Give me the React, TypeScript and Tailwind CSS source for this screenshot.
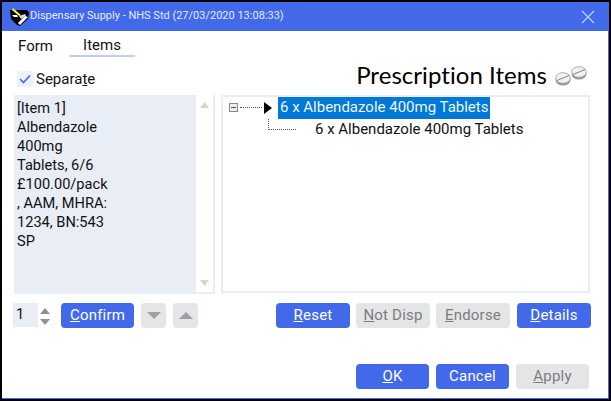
import React from "react";

function Btn({ children, disabled, w = "w-[74px]" }: { children: React.ReactNode; disabled?: boolean; w?: string }) {
  return (
    <div
      className={`${w} h-[25px] rounded-[4px] flex items-center justify-center text-[15px] tracking-[0.2px] ${
        disabled ? "bg-[#e4e5e7] text-[#7d7d7d]" : "bg-[#4169e9] text-white"
      }`}
    >
      {children}
    </div>
  );
}

function Tri({ up, className }: { up?: boolean; className: string }) {
  return (
    <svg width="16" height="8" viewBox="0 0 16 8" className={className}>
      <path d={up ? "M0 8 L8 0 L16 8 Z" : "M0 0 L8 8 L16 0 Z"} fill="currentColor" />
    </svg>
  );
}

function Logo() {
  return (
    <svg width="19" height="18" viewBox="0 0 19 18" className="shrink-0">
      <path d="M0 2 L17 2 L19 5 L18 11 L10 18 L7 17 L1 11 Z" fill="#000" />
      <path d="M3 0 L11 7 L9 8 L2 2 Z" fill="#f4ee3c" />
      <path d="M8 15 L15 8 L18 9 L10 17 Z" fill="#fff" />
      <path d="M9 8 L15 6 L16 8 L11 11 Z" fill="#ddd" />
      <path d="M2 7 L7 7 L8 9 L4 9 Z" fill="#fff" />
    </svg>
  );
}

function Pill({ className }: { className: string }) {
  return (
    <svg width="16" height="14" viewBox="0 0 16 14" className={className}>
      <ellipse cx="8" cy="8" rx="7.5" ry="5.5" fill="#9a9a9a" />
      <ellipse cx="8" cy="6" rx="7.3" ry="5.3" fill="#f2f2f2" stroke="#9c9c9c" strokeWidth="0.8" />
      <path d="M2 8.5 L14 3.5" stroke="#777" strokeWidth="0.9" />
    </svg>
  );
}

export default function App() {
  return (
    <div
      className="w-[611px] h-[401px] bg-black pl-[2px] pt-[2px] pr-[2px] pb-[2px] overflow-hidden text-[#111]"
      style={{ fontFamily: "Roboto, sans-serif" }}
    >
      <div className="w-[607px] h-[397px] bg-white border-r border-b border-[#4169e9] flex flex-col">
        <div className="h-[29px] bg-[#4169e9] flex items-center pl-[8px] pr-[13px] shrink-0">
          <Logo />
          <span className="ml-px text-[11px] text-[#e6ebff]">Dispensary Supply - NHS Std (27/03/2020 13:08:33)</span>
          <svg width="14" height="14" viewBox="0 0 14 14" className="ml-auto">
            <path d="M1 1 L13 13 M13 1 L1 13" stroke="#c5d2fb" strokeWidth="1.1" />
          </svg>
        </div>

        <div className="h-[27px] flex shrink-0 text-[15px]">
          <div className="ml-[16px] w-[51px] pt-[4px]">Form</div>
          <div className="w-[66px] h-[26px] border-b-2 border-[#c3cdec] text-center pt-[3px]">Items</div>
        </div>

        <div className="h-[37px] flex items-center justify-between shrink-0">
          <div className="flex items-center ml-[15px] mt-[5px]">
            <div className="w-[16px] h-[16px] bg-[#eef1f9] flex items-center justify-center">
              <svg width="12" height="10" viewBox="0 0 12 10">
                <path d="M1 5 L4.5 8.5 L11 1.5" fill="none" stroke="#4169e9" strokeWidth="1.6" />
              </svg>
            </div>
            <span className="ml-[3px] text-[15px]">
              Separa<u>t</u>e
            </span>
          </div>
          <div className="flex items-center mr-[21px] mt-[-3px]">
            <span className="text-[24px] text-black tracking-[0.05px]" style={{ fontFamily: "Lato, sans-serif" }}>
              Prescription Items
            </span>
            <div className="flex items-start ml-[8px] h-[24px]">
              <Pill className="mt-[9px]" />
              <Pill className="mt-[3px]" />
            </div>
          </div>
        </div>

        <div className="flex h-[199px] shrink-0">
          <div className="ml-[12px] w-[201px] bg-[#e9edf6] border-r-2 border-b-2 border-[#e9edf6] flex">
            <div className="w-[182px] pl-[3px] pt-[4px] text-[14.6px] leading-[19px]">
              [Item 1]<br />Albendazole<br />400mg<br />Tablets, 6/6<br />£100.00/pack<br />, AAM, MHRA:<br />1234, BN:543<br />SP
            </div>
            <div className="w-[17px] bg-white flex flex-col items-center justify-between pt-[7px] pb-[6px] text-[#d4d4d4]">
              <svg width="9" height="6" viewBox="0 0 9 6"><path d="M0 6 L4.5 0 L9 6 Z" fill="currentColor" /></svg>
              <svg width="9" height="6" viewBox="0 0 9 6"><path d="M0 0 L4.5 6 L9 0 Z" fill="currentColor" /></svg>
            </div>
          </div>
          <div className="ml-[6px] w-[369px] h-[198px] border-2 border-[#e9edf6] text-[15px] pl-[6px]">
            <div className="h-[21px] flex items-center">
              <div className="w-[9px] h-[9px] border border-[#8a8a8a] bg-[#ececec] flex items-center justify-center">
                <div className="w-[5px] h-px bg-[#2f57c8]" />
              </div>
              <div className="w-[22px] ml-[2px] border-t border-dotted border-[#555]" />
              <svg width="8" height="12" viewBox="0 0 8 12" className="ml-[2px]"><path d="M0 0 L8 6 L0 12 Z" fill="#000" /></svg>
              <div className="ml-[6px] h-[22px] w-[212px] bg-[#0078d7] text-[#eef6ff] pl-[2px] flex items-center whitespace-nowrap">
                6 x Albendazole 400mg Tablets
              </div>
            </div>
            <div className="flex h-[24px] whitespace-nowrap">
              <div className="ml-[39px] w-[28px] h-[11px] border-l border-b border-dotted border-[#555] mt-px" />
              <span className="ml-[19px]">6 x Albendazole 400mg Tablets</span>
            </div>
          </div>
        </div>

        <div className="h-[34px] flex items-end shrink-0 pl-[11px]">
          <div className="w-[25px] h-[24px] bg-[#e9edf6] pl-[3px] flex items-center text-[14.6px] mb-px">1</div>
          <div className="w-[14px] mr-[9px] h-[24px] flex flex-col items-center justify-center gap-[5px] text-[#8d9095]">
            <svg width="10" height="6" viewBox="0 0 10 6"><path d="M0 6 L5 0 L10 6 Z" fill="currentColor" /></svg>
            <svg width="10" height="6" viewBox="0 0 10 6"><path d="M0 0 L5 6 L10 0 Z" fill="currentColor" /></svg>
          </div>
          <Btn w="w-[73px]"><span><u>C</u>onfirm</span></Btn>
          <div className="ml-[7px]">
            <Btn disabled w="w-[25px]"><Tri className="text-[#a0a0a0] w-[14px] h-[7px]" /></Btn>
          </div>
          <div className="ml-[7px]">
            <Btn disabled w="w-[25px]"><Tri up className="text-[#a0a0a0] w-[14px] h-[7px]" /></Btn>
          </div>
          <div className="ml-[78px] flex gap-[6px]">
            <Btn><span><u>R</u>eset</span></Btn>
            <Btn disabled><span><u>N</u>ot Disp</span></Btn>
            <Btn disabled><span><u>E</u>ndorse</span></Btn>
            <div className="ml-px"><Btn><span><u>D</u>etails</span></Btn></div>
          </div>
        </div>

        <div className="flex justify-end gap-[7px] pr-[19px] mt-[36px]">
          <Btn w="w-[73px]"><span><u>O</u>K</span></Btn>
          <Btn w="w-[73px]">Cancel</Btn>
          <Btn disabled w="w-[73px]"><span><u>A</u>pply</span></Btn>
        </div>
      </div>
    </div>
  );
}
